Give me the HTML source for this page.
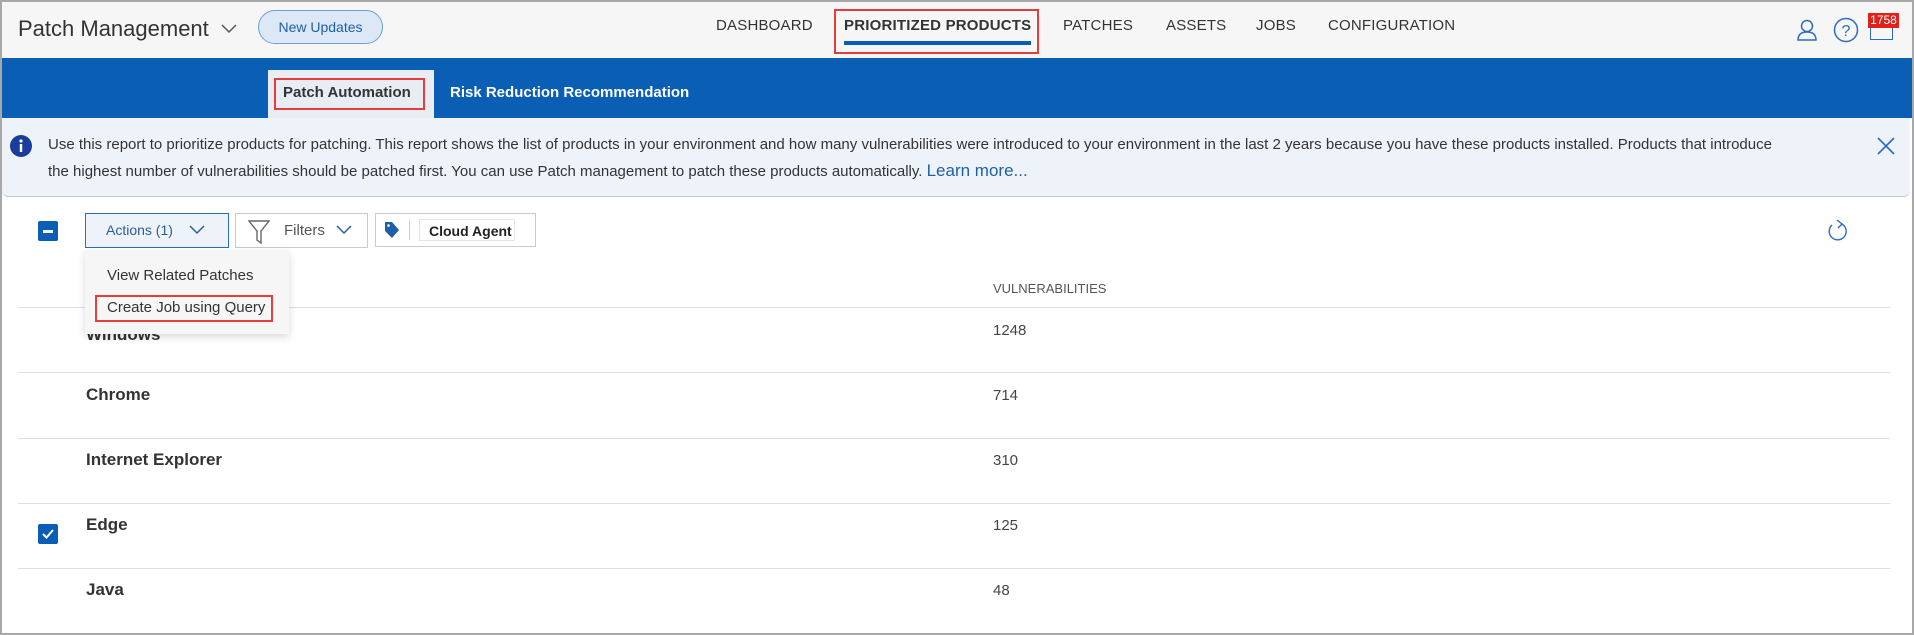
<!DOCTYPE html>
<html><head><meta charset="utf-8"><style>
*{box-sizing:border-box;margin:0;padding:0}
body{width:1914px;height:635px;overflow:hidden;background:#fff;font-family:"Liberation Sans",sans-serif;color:#333;position:relative}
.frame{position:absolute;left:0;top:0;width:1914px;height:635px;border:2px solid #a8a8a8;border-top-width:2px;pointer-events:none;z-index:10}
.abs{position:absolute}
.top{left:0;top:0;width:1914px;height:58px;background:#f6f6f6}
.nav{top:17px;font-size:15px;color:#333;letter-spacing:.2px}
.blue{left:0;top:58px;width:1914px;height:60px;background:#0a5fb4}
.info{left:2px;top:118px;width:1908px;height:79px;background:#eef3fa;border-bottom:1px solid #b9c8dc;border-radius:0 0 6px 6px}
.itxt{left:48px;font-size:15px;color:#333;white-space:nowrap}
.btn{top:213px;height:35px;border:1px solid #c5ccd4;background:#fff;font-size:15px;color:#555}
.row{left:18px;width:1872px;height:1px;background:#dedede}
.nm{left:86px;font-size:17px;font-weight:bold;color:#333}
.num{left:993px;font-size:15px;color:#444}
.red{border:2px solid #e53c3c}
</style></head><body>
<div class="abs top"></div>
<div class="abs" style="left:18px;top:16px;font-size:22px;color:#333">Patch Management</div>
<svg class="abs" style="left:221px;top:24px" width="16" height="10"><path d="M1 1l7 7 7-7" fill="none" stroke="#555" stroke-width="1.5"/></svg>
<div class="abs" style="left:258px;top:10px;width:125px;height:34px;border:1px solid #6f9fd6;background:#dce8f6;border-radius:17px;font-size:14px;color:#1f5fa8;text-align:center;line-height:32px">New Updates</div>
<div class="abs nav" style="left:716px">DASHBOARD</div>
<div class="abs nav" style="left:844px;font-weight:bold">PRIORITIZED PRODUCTS</div>
<div class="abs red" style="left:834px;top:9px;width:205px;height:45px"></div>
<div class="abs" style="left:844px;top:41px;width:187px;height:4px;background:#0a5fb4"></div>
<div class="abs nav" style="left:1063px">PATCHES</div>
<div class="abs nav" style="left:1166px">ASSETS</div>
<div class="abs nav" style="left:1256px">JOBS</div>
<div class="abs nav" style="left:1328px">CONFIGURATION</div>
<svg class="abs" style="left:1795px;top:18px" width="24" height="24"><circle cx="12" cy="8" r="5.5" fill="none" stroke="#2a6cc0" stroke-width="1.5"/><path d="M3 22c0-6 4-8 9-8s9 2 9 8z" fill="none" stroke="#2a6cc0" stroke-width="1.5"/></svg>
<svg class="abs" style="left:1833px;top:17px" width="26" height="26"><circle cx="13" cy="13" r="11.5" fill="none" stroke="#2a6cc0" stroke-width="1.5"/><text x="13" y="19" font-size="16" text-anchor="middle" fill="#2a6cc0" font-family="Liberation Sans">?</text></svg>
<div class="abs" style="left:1870px;top:22px;width:23px;height:18px;border:1.5px solid #2a6cc0"></div>
<div class="abs" style="left:1868px;top:13px;width:31px;height:15px;background:#e0201b;color:#fff;font-size:12px;line-height:15px;text-align:center">1758</div>
<div class="abs blue"></div>
<div class="abs" style="left:268px;top:70px;width:166px;height:48px;background:#e8edf3"></div>
<div class="abs red" style="left:274px;top:78px;width:151px;height:32px"></div>
<div class="abs" style="left:283px;top:84px;font-size:15px;font-weight:bold;color:#333">Patch Automation</div>
<div class="abs" style="left:450px;top:84px;font-size:15px;font-weight:bold;color:#fff">Risk Reduction Recommendation</div>
<div class="abs info"></div>
<svg class="abs" style="left:9px;top:134px" width="24" height="24"><circle cx="12" cy="12" r="11" fill="#1a3c9c"/><circle cx="12" cy="7" r="1.6" fill="#fff"/><rect x="10.8" y="10" width="2.4" height="8" fill="#fff"/></svg>
<div class="abs itxt" style="top:136px">Use this report to prioritize products for patching. This report shows the list of products in your environment and how many vulnerabilities were introduced to your environment in the last 2 years because you have these products installed. Products that introduce</div>
<div class="abs itxt" style="top:161px">the highest number of vulnerabilities should be patched first. You can use Patch management to patch these products automatically. <span style="color:#1f5fa8;font-size:17px">Learn more...</span></div>
<svg class="abs" style="left:1876px;top:136px" width="20" height="20"><path d="M2 2l16 16M18 2L2 18" stroke="#2a6cc0" stroke-width="1.6"/></svg>
<div class="abs" style="left:38px;top:221px;width:20px;height:20px;background:#0a5fb4;border-radius:2px"><div style="position:absolute;left:5px;top:9px;width:10px;height:2.5px;background:#fff"></div></div>
<div class="abs btn" style="left:85px;width:144px;background:#eef3fa;border-color:#2a6cc0;padding:8px 0 0 20px;color:#2a5d9c;font-size:14px">Actions (1)</div>
<svg class="abs" style="left:189px;top:225px" width="16" height="10"><path d="M1 1l7 7 7-7" fill="none" stroke="#2a5d9c" stroke-width="1.5"/></svg>
<div class="abs btn" style="left:235px;width:133px;padding:8px 0 0 48px">Filters</div>
<svg class="abs" style="left:248px;top:219px" width="22" height="26"><path d="M1 2h20l-8 10v12l-4-3v-9z" fill="none" stroke="#666" stroke-width="1.4"/></svg>
<svg class="abs" style="left:336px;top:225px" width="16" height="10"><path d="M1 1l7 7 7-7" fill="none" stroke="#2a5d9c" stroke-width="1.5"/></svg>
<div class="abs btn" style="left:375px;width:161px;height:34px"></div>
<svg class="abs" style="left:384px;top:221px" width="16" height="18"><path d="M1 1h7l7 8-7 8-7-7z" fill="#1f5fa8"/><circle cx="4.5" cy="4.5" r="1.3" fill="#fff"/></svg>
<div class="abs" style="left:409px;top:220px;width:1px;height:20px;background:#ccc"></div>
<div class="abs" style="left:419px;top:219px;width:96px;height:22px;border:1px solid #e4e4e4;font-size:14px;font-weight:bold;color:#222;padding:3px 0 0 9px">Cloud Agent</div>
<svg class="abs" style="left:1825px;top:217px" width="24" height="28"><path d="M17 7a8.5 8.5 0 1 1-10 1" fill="none" stroke="#2a6cc0" stroke-width="1.4"/><path d="M12 3l5 4-4 4" fill="none" stroke="#2a6cc0" stroke-width="1.4"/></svg>
<div class="abs" style="left:993px;top:281px;font-size:13px;color:#555">VULNERABILITIES</div>
<div class="abs row" style="top:307px"></div>
<div class="abs row" style="top:372px"></div>
<div class="abs row" style="top:438px"></div>
<div class="abs row" style="top:503px"></div>
<div class="abs row" style="top:568px"></div>
<div class="abs nm" style="top:325px;overflow:hidden;height:16px">Windows</div>
<div class="abs num" style="top:322px">1248</div>
<div class="abs nm" style="top:385px">Chrome</div>
<div class="abs num" style="top:387px">714</div>
<div class="abs nm" style="top:450px">Internet Explorer</div>
<div class="abs num" style="top:452px">310</div>
<div class="abs nm" style="top:515px">Edge</div>
<div class="abs num" style="top:517px">125</div>
<div class="abs" style="left:38px;top:524px;width:20px;height:20px;background:#0a5fb4;border-radius:2px"></div>
<svg class="abs" style="left:38px;top:524px" width="20" height="20"><path d="M5 10l3.5 3.5L15 6" fill="none" stroke="#fff" stroke-width="2"/></svg>
<div class="abs nm" style="top:580px">Java</div>
<div class="abs num" style="top:582px">48</div>
<div class="abs" style="left:85px;top:250px;width:204px;height:84px;background:#f6f6f6;box-shadow:0 3px 8px rgba(0,0,0,.15)"></div>
<div class="abs" style="left:107px;top:267px;font-size:15px;color:#333">View Related Patches</div>
<div class="abs red" style="left:95px;top:295px;width:178px;height:27px"></div>
<div class="abs" style="left:107px;top:299px;font-size:15px;color:#333">Create Job using Query</div>
<div class="frame"></div>
</body></html>
